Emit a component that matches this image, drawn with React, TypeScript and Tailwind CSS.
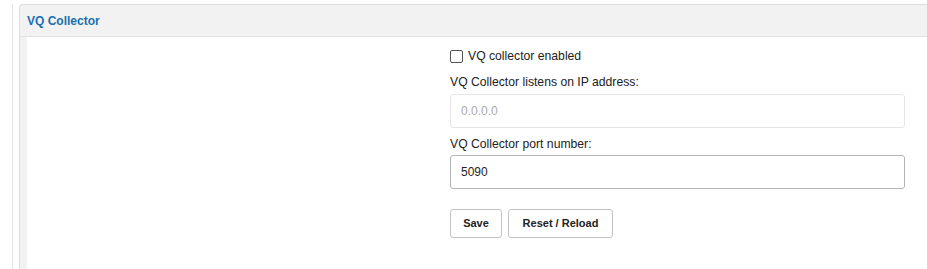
export default function App() {
  return (
    <div className="flex h-[269px] w-full overflow-hidden bg-white font-['Liberation_Sans',Arial,sans-serif] text-[12px] text-[#333]">
      <div className="mt-[4px] w-[13px] shrink-0 border-r border-[#e3e3e3]" />
      <div className="ml-[6px] mt-[4px] flex flex-1 flex-col rounded-tl-[4px] border-l border-t border-[#dddddd] bg-[#f2f2f2]">
        <div className="flex h-[32px] items-center border-b border-[#e0e0e0] px-[7px]">
          <h3 className="text-[12px] font-bold text-[#1a6faf]">VQ Collector</h3>
        </div>
        <div className="ml-[7px] flex flex-1 bg-white pl-[423px] pr-[22px] pt-[12px]">
          <form className="flex flex-1 flex-col">
            <label className="flex h-[14px] items-center gap-[5px] text-[12.2px] text-[#222]">
              <input type="checkbox" className="m-0 h-[13px] w-[13px] appearance-none rounded-[2px] border border-[#555] bg-white" />
              VQ collector enabled
            </label>
            <label className="mt-[11px] text-[12.2px] leading-[16px] text-[#222]">VQ Collector listens on IP address:</label>
            <input
              disabled
              placeholder="0.0.0.0"
              className="mt-[4px] h-[34px] w-full rounded-[3px] border border-[#e6e6e6] bg-white px-[10px] text-[12px] placeholder:text-[#aaa]"
            />
            <label className="mt-[8px] text-[12.2px] leading-[16px] text-[#222]">VQ Collector port number:</label>
            <input
              defaultValue="5090"
              className="mt-[3px] h-[34px] w-full rounded-[3px] border border-[#b3b3b3] bg-white px-[10px] text-[12px] text-[#222] outline-none"
            />
            <div className="mt-[20px] flex gap-[6px]">
              <button type="button" className="h-[29px] w-[52px] rounded-[3px] border border-[#c3c3c3] bg-white text-[11px] font-bold text-[#222]">
                Save
              </button>
              <button type="button" className="h-[29px] w-[105px] rounded-[3px] border border-[#c3c3c3] bg-white text-[11px] font-bold text-[#222]">
                Reset / Reload
              </button>
            </div>
          </form>
        </div>
      </div>
    </div>
  );
}
